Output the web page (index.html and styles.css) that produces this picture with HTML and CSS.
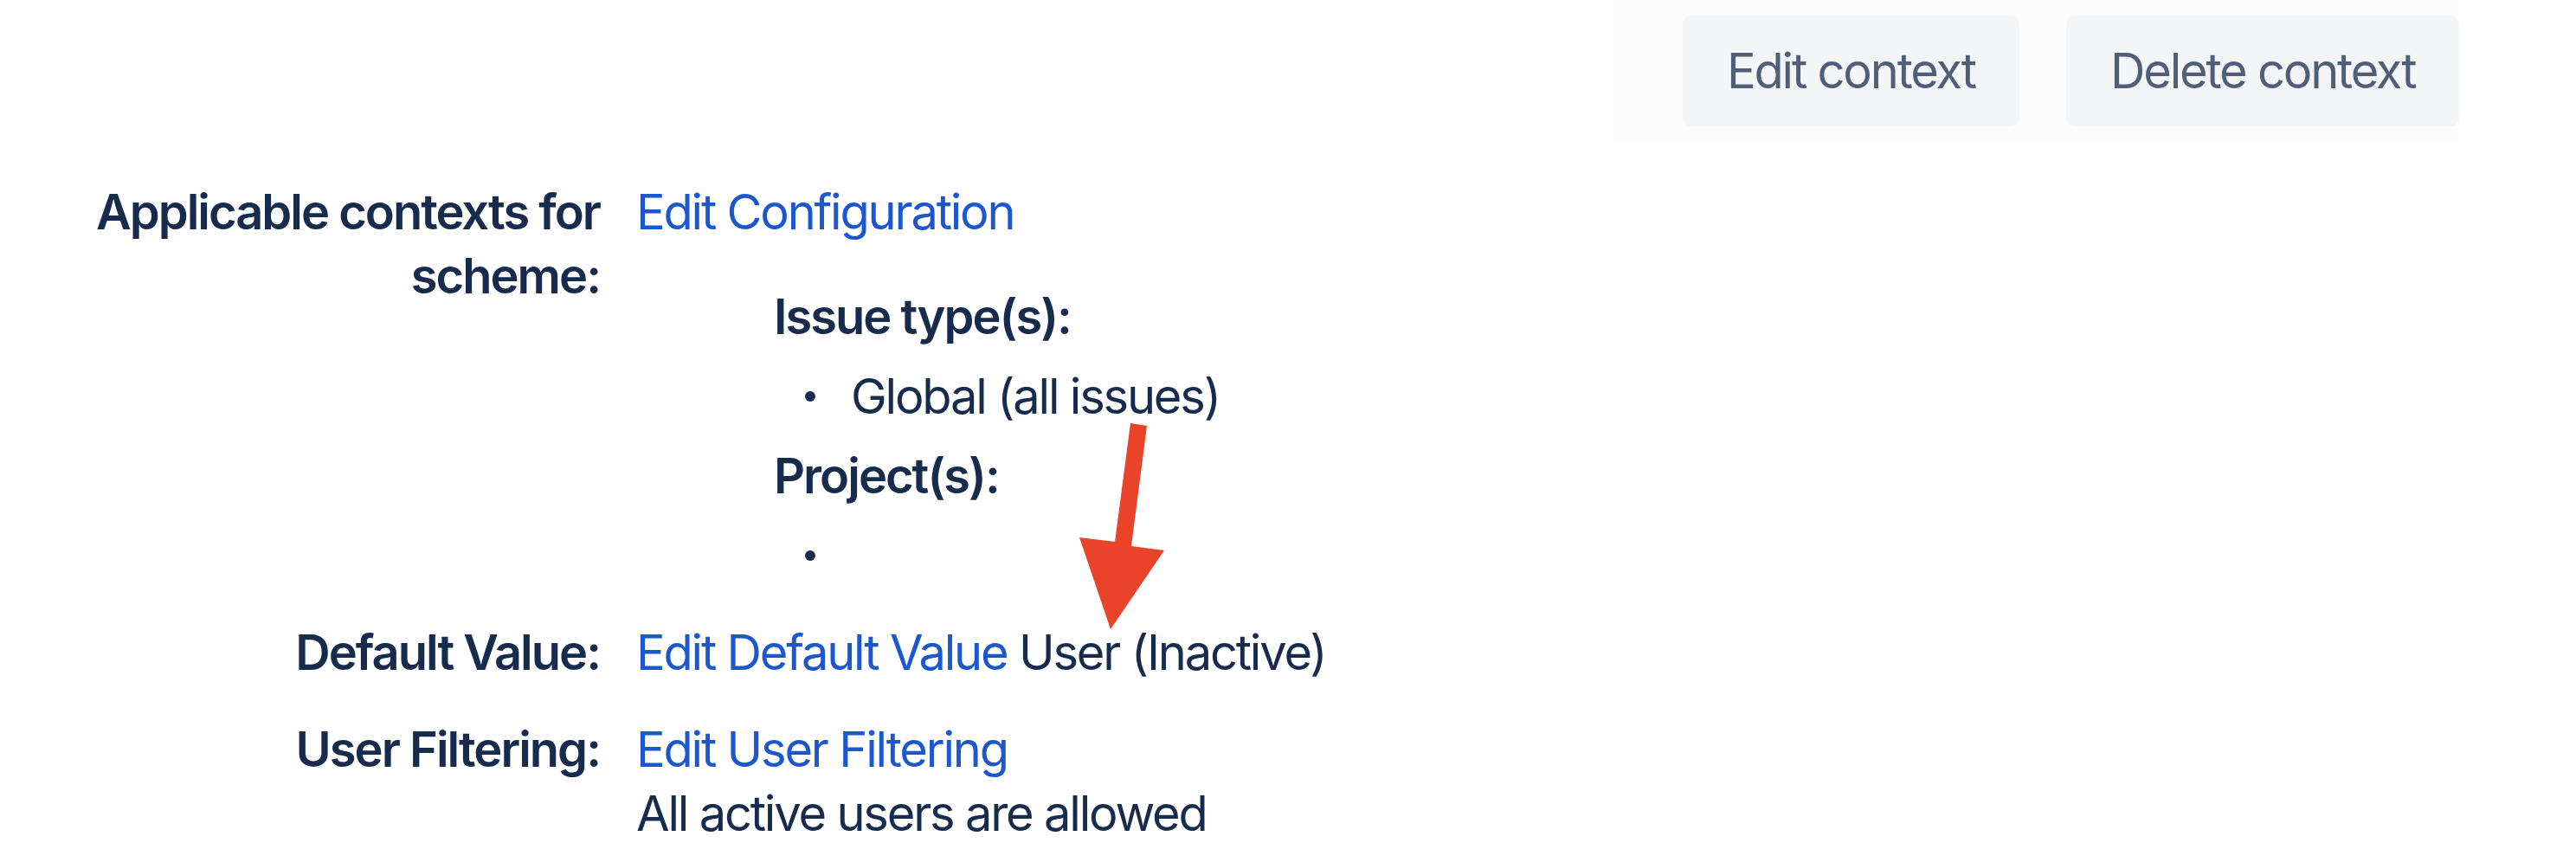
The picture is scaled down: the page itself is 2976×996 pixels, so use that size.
FILE: index.html
```html
<!DOCTYPE html>
<html lang="en">
<head>
<meta charset="utf-8">
<title>Custom field context</title>
<link rel="stylesheet" href="styles.css">
</head>
<body>
<div class="page">
  <div class="toolbar-wrap">
    <div class="toolbar">
      <button class="btn">Edit context</button>
      <button class="btn">Delete context</button>
    </div>
  </div>

  <div class="details">
    <div class="row">
      <div class="label">Applicable contexts for scheme:</div>
      <div class="value">
        <a class="link" href="#">Edit Configuration</a>
        <div class="scope">
          <div class="scope-title">Issue type(s):</div>
          <ul class="bullets">
            <li>Global (all issues)</li>
          </ul>
          <div class="scope-title">Project(s):</div>
          <ul class="bullets">
            <li></li>
          </ul>
        </div>
      </div>
    </div>

    <div class="row">
      <div class="label">Default Value:</div>
      <div class="value inline">
        <a class="link" href="#">Edit Default Value</a> User (Inactive)
      </div>
    </div>

    <div class="row">
      <div class="label">User Filtering:</div>
      <div class="value">
        <a class="link" href="#">Edit User Filtering</a>
        <div>All active users are allowed</div>
      </div>
    </div>
  </div>

  <svg class="arrow" width="120" height="250" viewBox="0 0 120 250" aria-hidden="true">
    <polygon fill="#e9432a" points="65,0 84,3 66,142 104,147 42,238 6,132 47,137"/>
  </svg>
</div>
</body>
</html>
```

FILE: styles.css
```css
html, body {
  margin: 0;
  padding: 0;
  background: #ffffff;
}

.page {
  position: relative;
  width: 2976px;
  height: 996px;
  overflow: hidden;
  font-family: Inter, "Noto Sans", "Liberation Sans", sans-serif;
  font-size: 56px;
  line-height: 74px;
  color: #172b4d;
  letter-spacing: -2.2px;
}

.toolbar-wrap {
  display: flex;
  justify-content: flex-end;
  padding-right: 135px;
}

.toolbar {
  display: flex;
  gap: 54px;
  width: 977px;
  box-sizing: border-box;
  padding: 18px 0 19px 80px;
  background: #fcfcfd;
}

.btn {
  flex-shrink: 0;
  white-space: nowrap;
  height: 128px;
  padding: 0 51px;
  border: none;
  border-radius: 10px;
  background: #f4f5f7;
  color: #505f79;
  font-family: inherit;
  font-size: 56px;
  letter-spacing: -2.2px;
  font-weight: 400;
}

.details {
  display: flex;
  flex-direction: column;
  gap: 38px;
  padding-top: 43px;
}

.row {
  display: grid;
  grid-template-columns: 620px 1fr;
  column-gap: 42px;
  padding-left: 73px;
}

.label {
  text-align: right;
  font-weight: 600;
  letter-spacing: -2px;
}

.value {
  display: flex;
  flex-direction: column;
  align-items: flex-start;
}

.value.inline {
  display: block;
}

.link {
  color: #1d57d0;
  text-decoration: none;
}

.scope {
  margin-top: 47px;
  padding-left: 159px;
  display: flex;
  flex-direction: column;
  gap: 18px;
}

.scope-title {
  font-weight: 600;
  letter-spacing: -2px;
}

.bullets {
  list-style: none;
  margin: 0;
  padding: 0;
}

.bullets li {
  position: relative;
  min-height: 74px;
  padding-left: 89px;
}

.bullets li::before {
  content: "";
  position: absolute;
  left: 36px;
  top: 31px;
  width: 12px;
  height: 12px;
  border-radius: 50%;
  background: #172b4d;
}

.arrow {
  position: absolute;
  left: 1241px;
  top: 489px;
}
```
